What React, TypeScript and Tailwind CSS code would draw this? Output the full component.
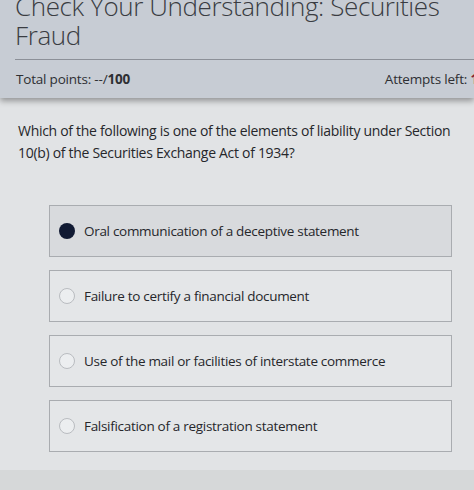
const options = [
  "Oral communication of a deceptive statement",
  "Failure to certify a financial document",
  "Use of the mail or facilities of interstate commerce",
  "Falsification of a registration statement",
];

export default function App() {
  const selected = 0;
  return (
    <div className="w-[474px] h-[490px] overflow-hidden bg-[#e1e3e5] text-[#2e2f33] font-['Open_Sans',sans-serif] flex flex-col">
      <div className="bg-[#c7ccd4] shadow-[0_3px_6px_rgba(0,0,0,0.35)] relative">
        <h1 className="-mt-[8px] pl-[15px] text-[26px] leading-[29px] tracking-[-0.4px] font-light text-[#3a3c42] whitespace-nowrap">
          Check Your Understanding: Securities
          <br />
          Fraud
        </h1>
        <div className="ml-[15px] mt-[9px] border-t border-[#8c9098]" />
        <div className="flex justify-between items-center pl-[16px] pt-[9px] pb-[9px] text-[13.5px] leading-[20px] tracking-[-0.2px] whitespace-nowrap">
          <span>
            Total points: --/<b className="font-bold">100</b>
          </span>
          <span className="-mr-[4px]">
            Attempts left: <b className="font-bold text-[#8a1c2e]">1</b>
          </span>
        </div>
      </div>

      <p className="px-[18px] pt-[22px] text-[14px] leading-[22px] tracking-[-0.3px] text-[#26272b]">
        Which of the following is one of the elements of liability under Section
        10(b) of the Securities Exchange Act of 1934?
      </p>

      <div className="flex flex-col gap-[13px] pl-[49px] pr-[22px] pt-[41px]">
        {options.map((o, i) => (
          <div
            key={o}
            className={`flex items-center gap-[9px] h-[52px] pl-[9px] border border-[#a9acb0] ${
              i === selected ? "bg-[#d8dadd]" : "bg-[#e4e6e8]"
            }`}
          >
            {i === selected ? (
              <span className="w-[16px] h-[16px] rounded-full bg-[#111a33]" />
            ) : (
              <span className="w-[16px] h-[16px] rounded-full border-[1.5px] border-[#b9bcc0] bg-[#eceef0]" />
            )}
            <span className="text-[13.5px] tracking-[-0.3px] text-[#26272b]">{o}</span>
          </div>
        ))}
      </div>

      <div className="mt-auto h-[20px] bg-[#d6d8d9]" />
    </div>
  );
}
